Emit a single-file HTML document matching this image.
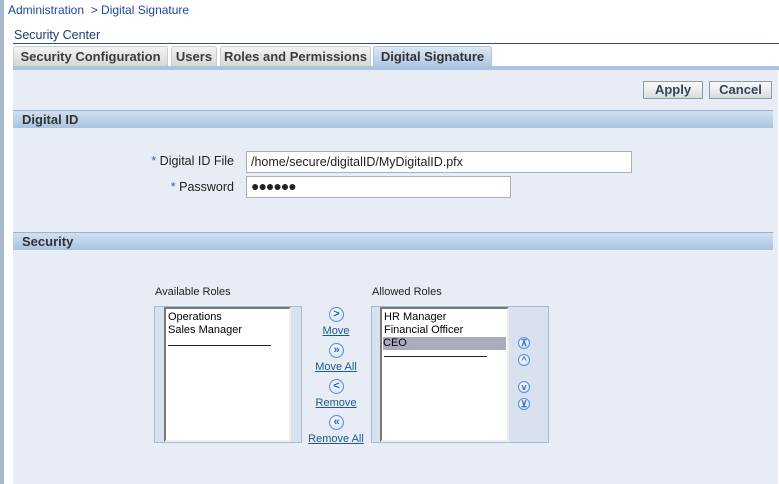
<!DOCTYPE html>
<html><head><style>
*{margin:0;padding:0;box-sizing:border-box}
body{width:779px;height:484px;background:#fff;position:relative;overflow:hidden;font-family:"Liberation Sans",Tahoma,sans-serif;font-size:12px;color:#000}
.a{position:absolute}
.tab{position:absolute;top:46px;height:20px;border:1px solid #c4ccd4;border-bottom:none;border-radius:3px 3px 0 0;background:linear-gradient(#f4f4f0,#d8d8d0);font-weight:bold;font-size:13px;color:#3c3c44;text-align:center;line-height:19px}
.hdr{position:absolute;left:13px;width:760px;height:18px;border-top:1px solid #98b4d0;background:linear-gradient(#d0e0f0,#a8c4e0);font-weight:bold;font-size:13px;color:#333;padding-left:9px;line-height:17px}
.btn{position:absolute;top:81px;height:18px;border:1px solid #8c9cb0;background:linear-gradient(#fafafa,#d8dce0);font-weight:bold;font-size:13px;color:#33445c;text-align:center;line-height:16px}
.inp{position:absolute;height:22px;border:1px solid #a8b0b8;background:#fff;padding-left:4px;line-height:20px;font-size:12.5px;color:#222}
.lbl{position:absolute;text-align:right;color:#222;font-size:12.5px}
.lbl b{color:#3a5f9a;font-weight:normal}
.outer{position:absolute;background:#d8e2ee;border:1px solid #a4bcd6}
.list{position:absolute;background:#fff;border:2px solid #777;border-right-color:#eee;border-bottom-color:#eee;font-size:11px;padding:2px 2px;line-height:13px}
.ic{position:absolute;width:15px;height:15px;border-radius:50%;border:1px solid #5a8ae0;background:radial-gradient(circle at 40% 35%,#fff,#c8dcf8);color:#2060d0;font-size:11px;text-align:center;line-height:12px;font-weight:bold}
.lk{position:absolute;color:#1c5a8c;text-decoration:underline;font-size:11px;text-align:center;width:70px}
</style></head><body>
<div class="a" style="left:0;top:0;width:4px;height:484px;background:#a8b8cc"></div>
<div class="a" style="left:8px;top:3px;color:#1c4a9c;font-size:12px">Administration &nbsp;&gt; Digital Signature</div>
<div class="a" style="left:14px;top:28px;color:#1c3c6c;font-size:12.5px">Security Center</div>
<div class="a" style="left:13px;top:43px;width:766px;height:1px;background:#3c4c6c"></div>
<div class="tab" style="left:13px;width:155px">Security Configuration</div>
<div class="tab" style="left:171px;width:46px">Users</div>
<div class="tab" style="left:220px;width:151px">Roles and Permissions</div>
<div class="tab" style="left:373px;width:119px;background:linear-gradient(#dce8f4,#b0c8e2);border-color:#b0c4d8;color:#333">Digital Signature</div>
<div class="a" style="left:13px;top:66px;width:766px;height:4px;background:#a8c4e0"></div>
<div class="a" style="left:13px;top:70px;width:765px;height:414px;background:#e8edf5"></div>
<div class="btn" style="left:643px;width:60px">Apply</div>
<div class="btn" style="left:709px;width:63px">Cancel</div>
<div class="hdr" style="top:110px">Digital ID</div>
<div class="lbl" style="left:100px;top:154px;width:134px"><b>*</b> Digital ID File</div>
<div class="inp" style="left:246px;top:151px;width:386px">/home/secure/digitalID/MyDigitalID.pfx</div>
<div class="lbl" style="left:100px;top:180px;width:134px"><b>*</b> Password</div>
<div class="inp" style="left:246px;top:176px;width:265px;font-size:14px;letter-spacing:-1px;line-height:19px">●●●●●●</div>
<div class="hdr" style="top:232px">Security</div>
<div class="a" style="left:155px;top:286px;font-size:11px;color:#222">Available Roles</div>
<div class="a" style="left:372px;top:286px;font-size:11px;color:#222">Allowed Roles</div>
<div class="outer" style="left:154px;top:306px;width:148px;height:137px"></div>
<div class="list" style="left:164px;top:307px;width:127px;height:135px">Operations<br>Sales Manager<div style="margin-top:8px;width:103px;height:1px;background:#222"></div></div>
<div class="outer" style="left:371px;top:306px;width:178px;height:137px"></div>
<div class="list" style="left:380px;top:307px;width:129px;height:135px">HR Manager<br>Financial Officer<br><div style="background:#a8acbc;margin:0 -1px">CEO</div><div style="margin-top:6px;width:103px;height:1px;background:#222"></div></div>
<div class="ic" style="left:329px;top:307px">&gt;</div>
<div class="lk" style="left:301px;top:325px">Move</div>
<div class="ic" style="left:329px;top:343px">»</div>
<div class="lk" style="left:301px;top:361px">Move All</div>
<div class="ic" style="left:329px;top:379px">&lt;</div>
<div class="lk" style="left:301px;top:397px">Remove</div>
<div class="ic" style="left:329px;top:415px">«</div>
<div class="lk" style="left:301px;top:433px">Remove All</div>
<div class="ic" style="left:518px;top:337px;width:12px;height:12px;font-size:9px;line-height:10px">⊼</div>
<div class="ic" style="left:518px;top:354px;width:12px;height:12px;font-size:9px;line-height:11px">^</div>
<div class="ic" style="left:518px;top:381px;width:12px;height:12px;font-size:9px;line-height:10px">v</div>
<div class="ic" style="left:518px;top:398px;width:12px;height:12px;font-size:9px;line-height:10px">⊻</div>
</body></html>
